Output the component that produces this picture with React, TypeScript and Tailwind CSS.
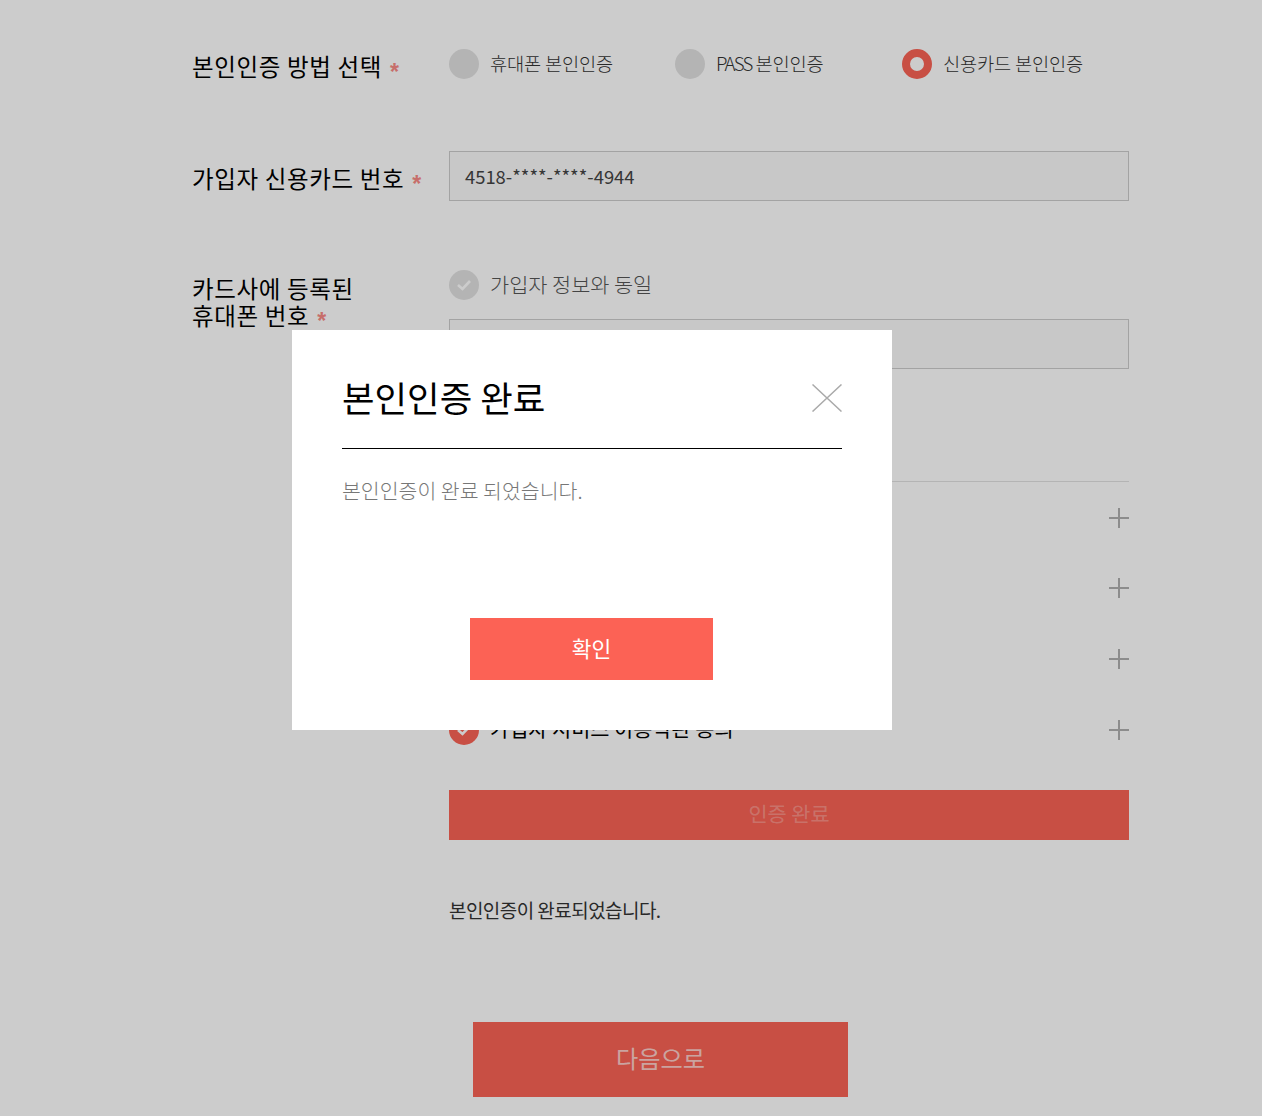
const FONT = "font-['Noto_Sans_CJK_KR','Liberation_Sans',sans-serif]";

function Star() {
  return (
    <span className="ml-[8px] inline-block h-[10px] w-[11px] align-[-4px] font-['Liberation_Sans',sans-serif] text-[23px] leading-[18px] font-bold text-[#f98a85]">
      *
    </span>
  );
}

function Radio({ label, prefix, active, width }: { label: string; prefix?: string; active?: boolean; width: string }) {
  return (
    <label className={`flex items-center gap-[11px] ${width}`}>
      {active ? (
        <span className="h-[30px] w-[30px] rounded-full border-[8px] border-[#fb6355] bg-white" />
      ) : (
        <span className="h-[30px] w-[30px] rounded-full bg-[#e2e2e2]" />
      )}
      <span className="mt-[-2px] text-[18.7px] leading-none font-light tracking-[-0.2px] text-[#333]">
        {prefix && <span className="tracking-[-1.8px]">{prefix}</span>} {label}
      </span>
    </label>
  );
}

function Check({ on }: { on?: boolean }) {
  return (
    <span className={`flex h-[30px] w-[30px] items-center justify-center rounded-full ${on ? "bg-[#fb6355]" : "bg-[#e2e2e2]"}`}>
      <svg width="16" height="12" viewBox="0 0 16 12" fill="none">
        <path d="M2 6l4.5 4L14 2" stroke="#fff" strokeWidth="2.6" />
      </svg>
    </span>
  );
}

function Plus() {
  return (
    <svg width="20" height="20" viewBox="0 0 20 20" className="text-[#b0b0b0]">
      <path d="M0 10h20M10 0v20" stroke="currentColor" strokeWidth="2" />
    </svg>
  );
}

const terms = ["개인정보 수집 및 이용 동의", "고유식별정보 처리 동의", "통신사 이용약관 동의", "가입자 서비스 이용약관 동의"];

export default function App() {
  return (
    <div className={`relative h-[1116px] w-full overflow-hidden bg-white text-black ${FONT}`}>
      <div className="ml-[192px] w-[937px]">
        <section className="flex h-[151px] items-start pt-[49px]">
          <h3 className="w-[257px] pt-[4px] text-[23.5px] leading-[27px] tracking-[0.65px]">
            본인인증 방법 선택
            <Star />
          </h3>
          <div className="flex">
            <Radio label="휴대폰 본인인증" width="w-[226px]" />
            <Radio prefix="PASS" label="본인인증" width="w-[227px]" />
            <Radio label="신용카드 본인인증" active width="w-[227px]" />
          </div>
        </section>

        <section className="flex h-[119px]">
          <h3 className="w-[257px] pt-[14px] text-[23.5px] leading-[27px] tracking-[0.65px]">
            가입자 신용카드 번호
            <Star />
          </h3>
          <div className="flex h-[50px] w-[680px] items-center border border-[#ccc] bg-[#fafafa] pt-[2px] pl-[15px] text-[18.4px] text-[#444]">
            4518-****-****-4944
          </div>
        </section>

        <section className="flex">
          <h3 className="w-[257px] pt-[5px] text-[23.5px] leading-[27px] tracking-[0.65px]">
            카드사에 등록된
            <br />
            휴대폰 번호
            <Star />
          </h3>
          <div className="w-[680px]">
            <div className="flex items-center gap-[11px]">
              <Check />
              <span className="mt-[-2px] text-[20.8px] leading-none font-light text-[#555]">가입자 정보와 동일</span>
            </div>
            <div className="mt-[19px] h-[50px] border border-[#ccc] bg-[#fafafa]" />
            <div className="mt-[112px] border-t border-[#e2e2e2] pt-[21px]">
              <ul className="flex flex-col gap-[40px]">
                {terms.map((t) => (
                  <li key={t} className="flex h-[30px] items-center justify-between [&:nth-child(n+3)]:mt-[1px]">
                    <span className="flex items-center gap-[11px]">
                      <Check on />
                      <span className="mt-[-3px] text-[20.8px] leading-none">{t}</span>
                    </span>
                    <Plus />
                  </li>
                ))}
              </ul>
              <div className="mt-[45px] flex h-[50px] items-center justify-center bg-[#fb6355] pb-[3px] text-[20.8px] text-[#ffffff]/30">
                인증 완료
              </div>
              <p className="mt-[57px] text-[19px] leading-[26px] tracking-[-0.55px] text-[#333]">본인인증이 완료되었습니다.</p>
            </div>
          </div>
        </section>

        <div className="mt-[99px] ml-[281px] flex h-[75px] w-[375px] items-center justify-center bg-[#fb6355] pb-[2px] text-[24.2px] text-white/70">
          다음으로
        </div>
      </div>

      {/* 딤 처리 + 완료 팝업 */}
      <div className="absolute inset-0 bg-black/20" />
      <div className="absolute top-[330px] left-[292px] flex h-[400px] w-[600px] flex-col bg-white px-[50px]">
        <div className="flex h-[119px] items-center justify-between border-b border-black pt-[36px] pb-[20px]">
          <h2 className="text-[35.4px] leading-none">본인인증 완료</h2>
          <svg width="30" height="28" viewBox="0 0 30 28" fill="none" className="mt-[2px]">
            <path d="M0.5 0.5l29 27M29.5 0.5l-29 27" stroke="#aaa" strokeWidth="1.5" />
          </svg>
        </div>
        <p className="mt-[27px] text-[20.5px] leading-[28px] font-light text-[#777]">본인인증이 완료 되었습니다.</p>
        <button type="button" className="mt-[114px] ml-[128px] h-[62px] w-[243px] bg-[#fc6255] pb-[2px] text-[21.5px] text-white">
          확인
        </button>
      </div>
    </div>
  );
}
